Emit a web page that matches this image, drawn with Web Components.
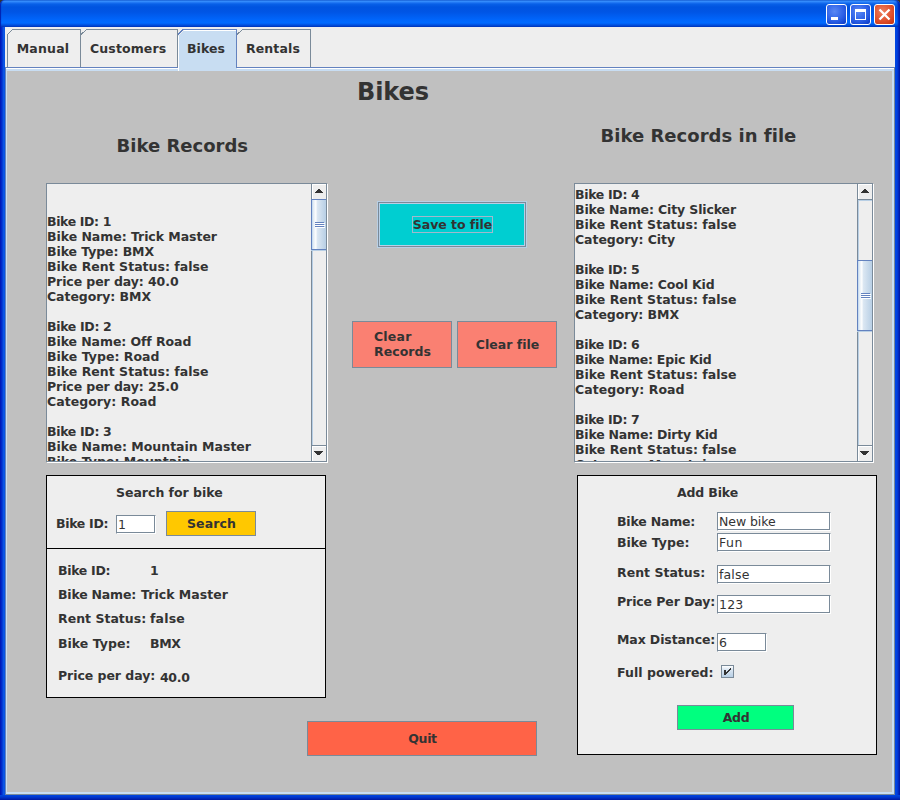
<!DOCTYPE html>
<html lang="en">
<head>
<meta charset="utf-8">
<title>Bikes</title>
<style>
html,body{margin:0;padding:0}
body{font-family:"DejaVu Sans",sans-serif;font-weight:bold;font-size:12.5px;line-height:15px;color:#333;width:900px;height:800px;overflow:hidden;background:#333}
</style>
</head>
<body>
<bike-window></bike-window>
<script>
function define(name, html, ready) {
  customElements.define(name, class extends HTMLElement {
    constructor() {
      super();
      this.attachShadow({mode: 'open'}).innerHTML = html;
    }
    connectedCallback() { if (ready) ready.call(this, this.shadowRoot); }
  });
}

/* Label whose tracking is spread so that the text takes up a set width. */
define('ui-label', `
<style>
:host{display:flow-root;flex:none}
span{display:block;width:max-content;white-space:pre;margin:var(--dy,0px) 0 calc(0px - var(--dy,0px))}
</style><span></span>`, function (root) {
  const span = root.querySelector('span');
  span.textContent = this.getAttribute('text');
  const w = +this.getAttribute('w');
  if (w) {
    const natural = span.getBoundingClientRect().width;
    span.style.letterSpacing = ((w - .5 - natural) / span.textContent.length).toFixed(3) + 'px';
  }
});

define('ui-button', `
<style>
:host{display:flex;align-items:center;justify-content:center;box-sizing:border-box;border:1px solid #7a8a99;background:var(--face);flex:none}
:host([focused]){box-shadow:0 0 0 1px #b8cfe5,inset 0 0 0 1px #b8cfe5}
div{border:1px solid transparent;margin-left:1px}
:host([focused]) div{border-color:#a3b8cc}
</style><div><slot></slot></div>`);

define('ui-field', `
<style>
:host{display:block;box-sizing:border-box;width:114px;height:19px;border:1px solid #7a8a99;border-right-color:#fff;border-bottom-color:#fff;background:#fff;flex:none}
div{box-sizing:border-box;height:17px;border-right:1px solid #7a8a99;border-bottom:1px solid #7a8a99;padding:1px 0 0 1px;font-weight:normal;line-height:15px}
</style><div><slot></slot></div>`);

define('ui-scrollbar', `
<style>
:host{display:grid;grid-template-rows:16px 1fr 16px;box-sizing:border-box;width:15px;border-left:1px solid #7a8a99;background:#eee}
.arrow{display:flex;justify-content:center;box-sizing:border-box;box-shadow:inset 1px 1px #fff;padding-top:5px}
svg{display:block}
.up{border-bottom:1px solid #7a8a99}
.down{border-top:1px solid #7a8a99}
.track{display:flex;flex-direction:column;box-shadow:inset 1px 1px #b8cfe5}
.thumb{margin-top:var(--at,-1px);margin-left:-1px;box-sizing:border-box;height:var(--size);border:1px solid #6382bf;border-right:0;background:linear-gradient(90deg,#c8ddf2 0 1px,#dde8f3 1px,#fff 4px,#dde8f3 5px,#b8cfe5);display:flex;align-items:center;justify-content:center;padding:1px 0 0 1px;box-shadow:0 1px #b8cfe5}
</style>
<div class="arrow up"><svg width="8" height="4" shape-rendering="crispEdges"><path fill="#333" d="M3 0h2v1h1v1h1v1h1v1H0V3h1V2h1V1h1z"/></svg></div>
<div class="track"><div class="thumb"><svg width="10" height="7" shape-rendering="crispEdges"><path stroke="#fff" d="M1 1.5h9M1 3.5h9M1 5.5h9"/><path stroke="#6382bf" d="M0 .5h9M0 2.5h9M0 4.5h9"/></svg></div></div>
<div class="arrow down"><svg width="10" height="5" shape-rendering="crispEdges"><path fill="#333" d="M0 0h9v1H8v1H7v1H6v1H3V3H2V2H1V1H0z"/></svg></div>`);

define('record-list', `
<style>
:host{display:grid;grid-template-columns:1fr auto;box-sizing:border-box;height:279px;background:#eee;border:1px solid #7a8a99;box-shadow:1px 1px #fff}
.text{overflow:hidden;height:277px}
.lines{margin-top:var(--scroll,0)}
ui-label{height:15px}
</style>
<div class="text"><div class="lines"></div></div><ui-scrollbar></ui-scrollbar>`, function (root) {
  const box = root.querySelector('.lines');
  for (const row of this.getAttribute('records').split('|')) {
    const [text, w] = row.split('@');
    const l = document.createElement('ui-label');
    l.setAttribute('text', text);
    if (w) l.setAttribute('w', w - 1);
    box.append(l);
  }
});

define('ui-tab', `
<style>
:host{display:block;position:relative;height:40px;width:var(--w);flex:none}
svg{position:absolute;left:0;top:0}
ui-label{padding:12px 0 0 9px;position:relative}
:host([first]) ui-label{padding-left:9.700px}
</style><svg height="42" shape-rendering="crispEdges"></svg><ui-label></ui-label>`, function (root) {
  const w = +this.getAttribute('width'), on = this.hasAttribute('selected');
  this.style.setProperty('--w', w + 'px');
  const svg = root.querySelector('svg');
  svg.setAttribute('width', w + 1);
  const edge = on ? '#6382bf' : '#7a8a99';
  svg.innerHTML = on
    ? `<path fill="#c8ddf2" d="M1 42V6L6 1H${w}V42z"/><path fill="none" stroke="#fff" d="M.5 42V6.5M6 1.5H${w - 1}"/><path fill="none" stroke="${edge}" d="M0 5.5L5 .5H${w - .5}V39"/>`
    : `<path fill="none" stroke="${edge}" d="${this.hasAttribute('first') ? 'M.5 38V5.5' : 'M0 5.5'}L5.5 .5H${w - .5}V38"/>`;
  const l = root.querySelector('ui-label');
  const n = document.createElement('ui-label');
  n.setAttribute('text', this.getAttribute('text'));
  n.setAttribute('w', this.getAttribute('tw'));
  l.replaceWith(n);
});

define('title-bar', `
<style>
:host{display:flex;justify-content:flex-end;gap:3px;box-sizing:border-box;height:27px;padding:4px 5px 0 0;border-radius:5px 5px 0 0;box-shadow:inset 2px 0 1px -1px #0020b0,inset -3px 0 2px -1px #0020b0;background:linear-gradient(#0a50c8 0,#3c96ff 1px,#2a80f8 2px,#0860e8 4px,#0054e0 7px,#0055e5 12px,#0066fc 20px,#006aff 23px,#0050e0 25px,#0036b8 27px)}
svg{display:block}
</style>
<svg width="21" height="21" viewBox="0 0 21 21"><defs><radialGradient id="b" cx=".4" cy=".35" r=".8"><stop stop-color="#5a88f4"/><stop offset=".6" stop-color="#2b5fe6"/><stop offset="1" stop-color="#0c3cc8"/></radialGradient></defs><rect x=".5" y=".5" width="20" height="20" rx="2.5" fill="url(#b)" stroke="#fff"/><path fill="#fff" d="M5 13h7v3H5z"/></svg>
<svg width="21" height="21" viewBox="0 0 21 21"><rect x=".5" y=".5" width="20" height="20" rx="2.5" fill="url(#b)" stroke="#fff"/><path fill="#fff" fill-rule="evenodd" d="M5 5h11v11H5zM6 8v7h9V8z"/></svg>
<svg width="21" height="21" viewBox="0 0 21 21"><defs><radialGradient id="r" cx=".4" cy=".35" r=".8"><stop stop-color="#ee8060"/><stop offset=".6" stop-color="#e0502c"/><stop offset="1" stop-color="#c83410"/></radialGradient></defs><rect x=".5" y=".5" width="20" height="20" rx="2.5" fill="url(#r)" stroke="#fff"/><path stroke="#fff" stroke-width="2.3" d="M5.500 5.500l10 10M15.500 5.500l-10 10"/></svg>`);

define('search-panel', `
<style>
:host{display:block;box-sizing:border-box;width:280px;height:223px;border:1px solid #000;background:#eee}
.top{box-sizing:border-box;height:73px;border-bottom:1px solid #000;padding:9px 0 0 9px}
.title{padding-left:60px}
.find{display:flex;margin-top:11px}
.find ui-label{padding-top:5px}
.find>ui-label{width:60px}
.find ui-field{width:40px;margin:4px 10px 0 0}
.find ui-field ui-label,.find ui-button ui-label{padding:0}
.find ui-button{width:90px;height:25px}
.row{display:flex;height:15px;padding-left:11px}
.row>:first-child{width:var(--c,92px)}
</style>
<div class="top"><ui-label class="title" text="Search for bike" w="107.200"></ui-label>
<div class="find"><ui-label text="Bike ID:" w="52.700"></ui-label><ui-field><ui-label text="1"></ui-label></ui-field><ui-button style="--face:#ffc800"><ui-label text="Search" w="49.500"></ui-label></ui-button></div></div>
<div class="row" style="margin-top:14px"><ui-label text="Bike ID:" w="52.700"></ui-label><ui-label text="1"></ui-label></div>
<div class="row" style="margin-top:9px;--c:83px"><ui-label text="Bike Name:" w="78.500"></ui-label><ui-label text="Trick Master" w="87.500"></ui-label></div>
<div class="row" style="margin-top:9px"><ui-label text="Rent Status:" w="88.700"></ui-label><ui-label text="false" w="35.500"></ui-label></div>
<div class="row" style="margin-top:10px"><ui-label text="Bike Type:" w="73"></ui-label><ui-label text="BMX" w="31"></ui-label></div>
<div class="row" style="margin-top:17px;--c:102px"><ui-label text="Price per day:" w="97.700"></ui-label><ui-label text="40.0" w="30" style="padding-top:2px"></ui-label></div>`);

define('ui-check', `
<style>
:host{display:block;box-sizing:border-box;width:13px;height:13px;border:1px solid #7a8a99;background:linear-gradient(#fff,#dde8f3 30%,#b8cfe5)}
svg{display:block}
</style><svg width="11" height="11" shape-rendering="crispEdges"><path fill="#333" d="M2 4h2v2h1V5h1V4h1V3h1V2h1v2H8v1H7v1H6v1H5v1H4v1H2z"/></svg>`);

define('add-panel', `
<style>
:host{display:block;box-sizing:border-box;width:300px;height:280px;border:1px solid #000;background:#eee;padding-top:9px}
.title{padding-left:99px}
.grid{display:grid;grid-template-columns:100px auto;grid-template-rows:21px 32px 30px 38px 32px 41px;padding:12px 0 0 39px}
ui-button{width:117px;height:25px;margin:-1px 0 0 99px}
.grid>*{margin-top:var(--t,0)}
</style>
<ui-label class="title" text="Add Bike" w="61.500"></ui-label>
<div class="grid">
<ui-label style="--t:2px" text="Bike Name:" w="78.700"></ui-label><ui-field><ui-label text="New bike" w="57"></ui-label></ui-field>
<ui-label style="--t:2px" text="Bike Type:" w="73"></ui-label><ui-field><ui-label text="Fun" w="24.500"></ui-label></ui-field>
<ui-label text="Rent Status:" w="88.700"></ui-label><ui-field><ui-label text="false" w="31"></ui-label></ui-field>
<ui-label style="--t:-1px" text="Price Per Day:" w="98.700"></ui-label><ui-field><ui-label text="123" w="25"></ui-label></ui-field>
<ui-label style="--t:-1px" text="Max Distance:" w="98.700"></ui-label><ui-field style="width:50px"><ui-label text="6"></ui-label></ui-field>
<ui-label text="Full powered:" w="97"></ui-label><ui-check style="margin-left:4px"></ui-check>
</div>
<ui-button style="--face:#00ff7f"><ui-label text="Add" w="27"></ui-label></ui-button>`);

define('bikes-page', `
<style>
:host{display:grid;height:721px;background:#c0c0c0;grid-template-columns:39px 261px 21px 24px 205px 17px 303px;grid-template-rows:650px 1fr;box-sizing:border-box}
.left{grid-area:1/2/2/4;padding-top:62px}
.mid{grid-area:1/5/2/6;padding-top:5px}
.right{grid-area:1/7/3/8;padding-top:52px}
.quit{grid-area:2/2/3/7;margin-left:261px;width:230px;height:35px}
h1,h2{margin:0;font-size:18px;line-height:25px}
h1{font-size:24px;line-height:30px;padding-left:5px;--dy:1px}
.left h2{padding-left:70.500px}
.right h2{padding-left:26.500px}
.left record-list{width:281px;margin-top:25px}
.right record-list{width:299px;margin-top:35px;--scroll:3px}
search-panel{margin-top:13px}
add-panel{margin:13px 0 0 3px}
.save{width:148px;height:45px;margin:96px 0 0 26px}
.clear{display:flex;gap:5px;margin-top:74px}
.clear ui-button{width:100px;height:47px}
.two{--dy:-1px;padding-top:1px;margin-top:-1px}
</style>
<div class="left"><h2><ui-label text="Bike Records" w="132"></ui-label></h2>
<record-list style="--size:51px" records=" | |Bike ID: 1@65.500|Bike Name: Trick Master@171.500|Bike Type: BMX@108.500|Bike Rent Status: false@163|Price per day: 40.0@133|Category: BMX@105.500| |Bike ID: 2@66|Bike Name: Off Road@145|Bike Type: Road@114|Bike Rent Status: false@163|Price per day: 25.0@133|Category: Road@111| |Bike ID: 3@66|Bike Name: Mountain Master@205.500|Bike Type: Mountain@145"></record-list>
<search-panel></search-panel></div>
<div class="mid"><h1><ui-label text="Bikes" w="72.500"></ui-label></h1>
<ui-button class="save" focused style="--face:#00ced1"><ui-label text="Save to file" w="79.500"></ui-label></ui-button>
<div class="clear"><ui-button style="--face:#fa8072"><div class="two"><ui-label text="Clear" w="38"></ui-label><ui-label text="Records" w="57.500"></ui-label></div></ui-button><ui-button style="--face:#fa8072"><ui-label text="Clear file" w="63.500"></ui-label></ui-button></div></div>
<div class="right"><h2><ui-label text="Bike Records in file" w="195.700"></ui-label></h2>
<record-list style="--size:71px;--at:60px" records="Bike ID: 4@66|Bike Name: City Slicker@162.500|Bike Rent Status: false@163|Category: City@101.500| |Bike ID: 5@66|Bike Name: Cool Kid@141|Bike Rent Status: false@163|Category: BMX@105.500| |Bike ID: 6@66|Bike Name: Epic Kid@138|Bike Rent Status: false@163|Category: Road@111| |Bike ID: 7@66|Bike Name: Dirty Kid@144|Bike Rent Status: false@163|Category: Mountain@142"></record-list>
<add-panel></add-panel></div>
<ui-button class="quit" style="--face:#ff6347"><ui-label text="Quit" w="29"></ui-label></ui-button>`);

define('bike-window', `
<style>
:host{display:block;box-sizing:border-box;width:900px;height:800px;border-radius:5px 5px 0 0;background:linear-gradient(90deg,#0010b0 0,#0030d0 2px,#1060e8 4px,#0048e0 5px,#0048e0 895px,#0040e0 897px,#0014a0 900px)}
.body{margin:0 5px;height:768px;background:#eee}
.tabs{display:flex;box-sizing:border-box;height:40px;padding:2px 0 0 2px;position:relative;z-index:1}
.pane{box-sizing:border-box;height:728px;border:1px solid #7a8a99;border-top-color:#6382bf;border-left-color:#6382bf}
.inner{box-sizing:border-box;height:723px;border:solid #c8ddf2;border-width:0 2px 2px 1px}
.white{height:1px;background:#fff}
.blue{height:2px;background:#c8ddf2}
.foot{height:5px;background:linear-gradient(#0048e0,#0038d0 2px,#0018a0 5px)}
</style>
<title-bar></title-bar>
<div class="body"><div class="tabs"><ui-tab first width="74" text="Manual" tw="53.200"></ui-tab><ui-tab width="97" text="Customers" tw="76.800"></ui-tab><ui-tab selected width="59" text="Bikes" tw="38.500"></ui-tab><ui-tab width="74" text="Rentals" tw="54.500"></ui-tab></div>
<div class="pane"><div class="white"></div><div class="blue"></div><div class="inner"><bikes-page></bikes-page></div></div></div>
<div class="foot"></div>`);
</script>
</body>
</html>
